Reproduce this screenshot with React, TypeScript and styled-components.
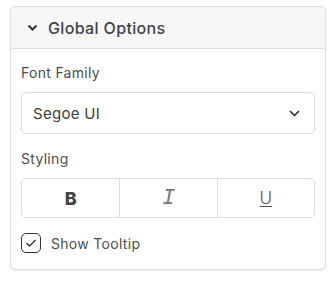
import { createGlobalStyle, styled } from "styled-components";

const GlobalStyle = createGlobalStyle`
    body {
        margin: 0;
        background: #ffffff;
        font-family: "Inter", "Open Sans", sans-serif;
        color: #444;
    }
`

const Page = styled.div`
    padding: 6px 8px 12px 10px;
`

const Card = styled.div`
    width: 316px;
    box-sizing: border-box;
    border: 1px solid #dddddd;
    border-radius: 5px;
    background: #ffffff;
    box-shadow: 0 1px 2px rgba(0, 0, 0, 0.06);
    overflow: hidden;
`

const Header = styled.div`
    display: flex;
    align-items: center;
    gap: 10px;
    height: 41px;
    padding: 0 16px;
    background: #f7f7f7;
    border-bottom: 1px solid #dddddd;
    font-size: 16px;
    font-weight: 500;
    letter-spacing: 0.35px;
    color: #3f4249;
`

const Body = styled.div`
    display: flex;
    flex-direction: column;
    padding: 14px 10px 16px;
`

const Label = styled.div`
    font-size: 14px;
    line-height: 20px;
    letter-spacing: 0.3px;
    color: #4d4d4d;
    margin-bottom: 9px;
`

const SelectBox = styled.div`
    display: flex;
    align-items: center;
    justify-content: space-between;
    height: 42px;
    box-sizing: border-box;
    padding: 0 14px 0 11px;
    border: 1px solid #dcdcdc;
    border-radius: 5px;
    font-size: 15px;
    letter-spacing: 0.3px;
    color: #3d3d3d;
    margin-bottom: 15px;
`

const ButtonGroup = styled.div`
    display: grid;
    grid-template-columns: 1fr 1fr 1fr;
    height: 40px;
    box-sizing: border-box;
    border: 1px solid #dcdcdc;
    border-radius: 5px;
    overflow: hidden;
    margin-bottom: 15px;
`

const variants = {
    bold: `font-family: "Inter", sans-serif; font-weight: 800; font-size: 18px; color: #444;`,
    italic: `font-family: "Liberation Mono", monospace; font-style: italic; font-weight: 400; font-size: 22px; color: #777;`,
    underline: `font-family: "Inter", sans-serif; font-weight: 300; font-size: 17px; color: #555; text-decoration: underline; text-underline-offset: 2px; text-decoration-thickness: 1px;`,
}

const StyleButton = styled.button<{ $variant: keyof typeof variants }>`
    display: flex;
    align-items: center;
    justify-content: center;
    background: #ffffff;
    border: none;
    border-left: 1px solid #dcdcdc;
    padding: 0;
    &:first-child {
        border-left: none;
    }
    ${(p) => variants[p.$variant]}
`

const CheckRow = styled.label`
    display: flex;
    align-items: center;
    gap: 10px;
    font-size: 14px;
    letter-spacing: 0.3px;
    color: #4d4d4d;
    height: 20px;
`

const CheckBox = styled.span`
    display: flex;
    align-items: center;
    justify-content: center;
    width: 20px;
    height: 20px;
    box-sizing: border-box;
    border: 1.5px solid #333;
    border-radius: 5px;
`

export default function App() {
    return (
        <>
            <GlobalStyle />
            <Page>
                <Card>
                    <Header>
                        <svg width="11" height="7" viewBox="0 0 11 7">
                            <path d="M1.5 1.5 L5.5 5.5 L9.5 1.5" fill="none" stroke="#333" strokeWidth="2" />
                        </svg>
                        Global Options
                    </Header>
                    <Body>
                        <Label>Font Family</Label>
                        <SelectBox>
                            Segoe UI
                            <svg width="11" height="7" viewBox="0 0 11 7">
                                <path d="M1 1 L5.5 5.5 L10 1" fill="none" stroke="#222" strokeWidth="1.5" />
                            </svg>
                        </SelectBox>
                        <Label>Styling</Label>
                        <ButtonGroup>
                            <StyleButton $variant="bold">B</StyleButton>
                            <StyleButton $variant="italic">I</StyleButton>
                            <StyleButton $variant="underline">U</StyleButton>
                        </ButtonGroup>
                        <CheckRow>
                            <CheckBox>
                                <svg width="12" height="10" viewBox="0 0 12 10">
                                    <path d="M1.5 5 L4.5 8 L10.5 2" fill="none" stroke="#333" strokeWidth="1.3" />
                                </svg>
                            </CheckBox>
                            Show Tooltip
                        </CheckRow>
                    </Body>
                </Card>
            </Page>
        </>
    )
}
